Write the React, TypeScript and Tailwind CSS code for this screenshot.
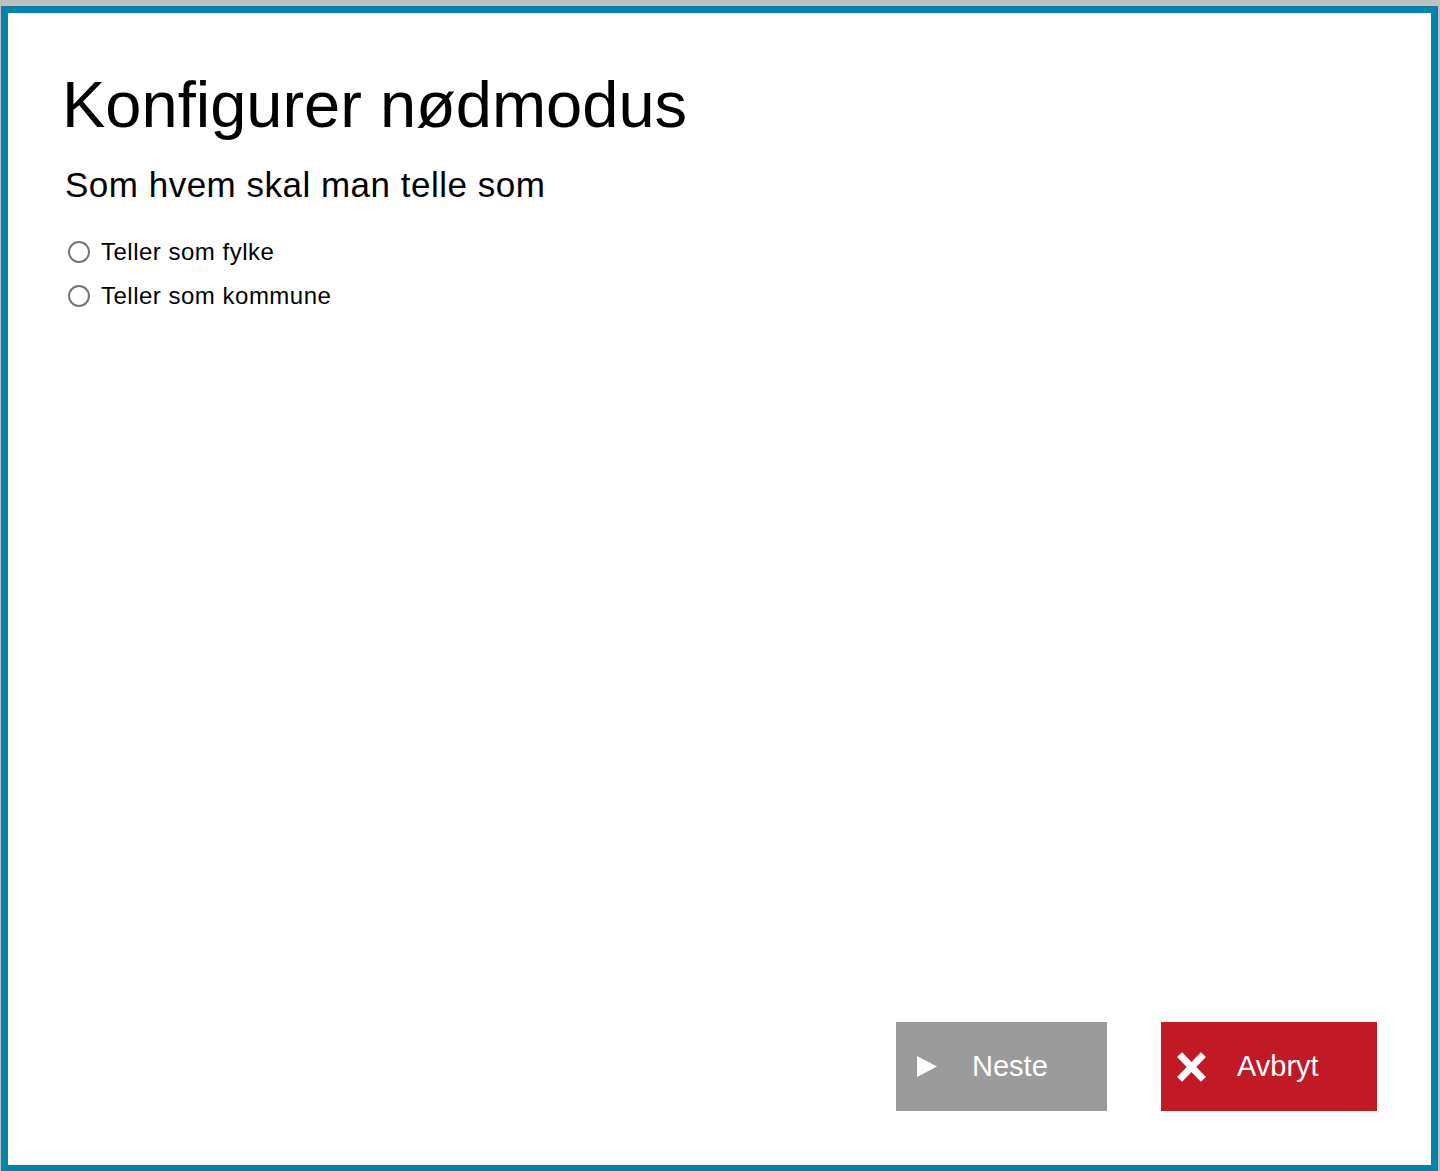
import { useState } from "react";

const options = ["Teller som fylke", "Teller som kommune"];

function PlayIcon() {
  return (
    <svg width="20" height="21" viewBox="0 0 20 21" className="shrink-0">
      <polygon points="0,0 20,10.5 0,21" fill="#ffffff" />
    </svg>
  );
}

function CrossIcon() {
  return (
    <svg width="29" height="30" viewBox="0 0 29 30" className="shrink-0">
      <line x1="2.6" y1="2.6" x2="26.4" y2="27.4" stroke="#ffffff" strokeWidth="7" />
      <line x1="26.4" y1="2.6" x2="2.6" y2="27.4" stroke="#ffffff" strokeWidth="7" />
    </svg>
  );
}

export default function App() {
  const [choice, setChoice] = useState<string | null>(null);

  return (
    <div
      className="h-[1171px] w-[1440px] bg-[#c0c0c0] pt-[6px] pl-px pr-[2px]"
      style={{ fontFamily: '"Liberation Sans", Arial, sans-serif' }}
    >
      <div className="flex h-full flex-col border-x-[7px] border-t-[7px] border-b-[6px] border-[#0383ab] bg-white">
        <div className="pl-[54px] pt-[59px]">
          <h1 className="text-[65px] leading-none font-normal text-black">Konfigurer nødmodus</h1>
          <h2 className="mt-[30px] ml-[3px] text-[35px] leading-none font-normal tracking-[0.5px] text-black">
            Som hvem skal man telle som
          </h2>

          {/* Radio options */}
          <div className="mt-[38px] ml-[6px] flex flex-col gap-[20px]">
            {options.map((opt) => (
              <label
                key={opt}
                className="flex cursor-pointer items-center gap-[11px]"
                onClick={() => setChoice(opt)}
              >
                <span className="flex h-[22px] w-[22px] shrink-0 items-center justify-center rounded-full border-2 border-[#767676] bg-white">
                  {choice === opt && <span className="h-[10px] w-[10px] rounded-full bg-[#333]" />}
                </span>
                <span className="text-[24px] leading-none tracking-[0.5px] text-black">{opt}</span>
              </label>
            ))}
          </div>
        </div>

        <div className="flex-1" />

        {/* Footer buttons */}
        <div className="flex justify-end gap-[54px] pr-[54px] pb-[54px]">
          <button className="flex h-[89px] w-[211px] items-center gap-[35px] bg-[#9b9b9b] pl-[21px] text-white">
            <PlayIcon />
            <span className="text-[29px] leading-none">Neste</span>
          </button>
          <button className="flex h-[89px] w-[216px] items-center gap-[31px] bg-[#c21927] pl-[16px] text-white">
            <CrossIcon />
            <span className="text-[29px] leading-none">Avbryt</span>
          </button>
        </div>
      </div>
    </div>
  );
}
